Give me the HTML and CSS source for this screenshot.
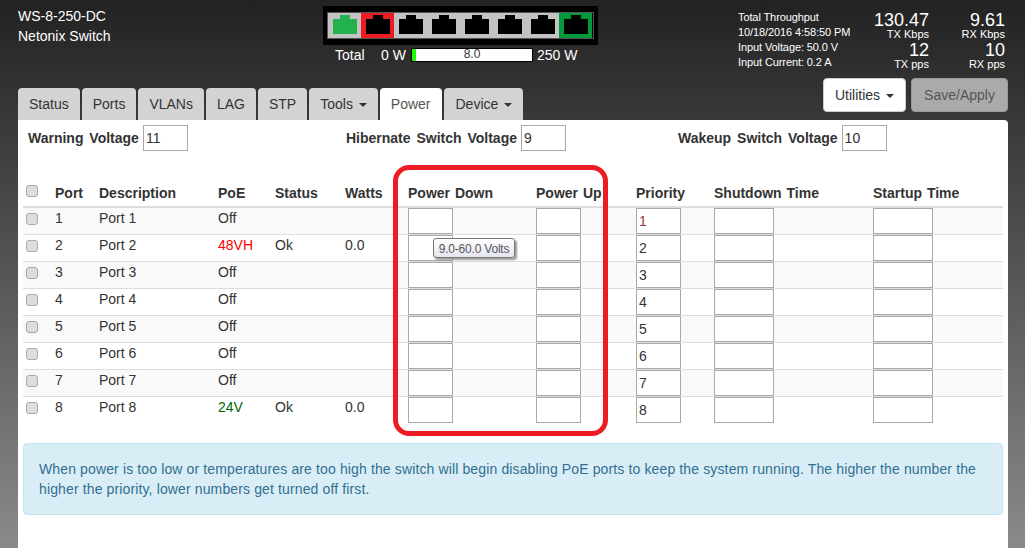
FILE: index.html
```html
<!DOCTYPE html>
<html lang="en">
<head>
<meta charset="utf-8">
<title>Netonix Switch</title>
<link rel="stylesheet" href="styles.css">
</head>
<body>
<header class="top">
  <div class="title"><div>WS-8-250-DC</div><div>Netonix Switch</div></div>
  <div class="device">
    <div class="ports">
      <div class="ports-inner">
        <svg class="port idle" viewBox="0 0 33 25"><rect class="frame" width="33" height="25"/><path class="jack up" d="M5 6h7V2h10v4h7v15H5z"/></svg>
        <svg class="port fault" viewBox="0 0 33 25"><rect class="frame" width="33" height="25"/><path class="jack" d="M5 6h7V2h10v4h7v15H5z"/></svg>
        <svg class="port idle" viewBox="0 0 33 25"><rect class="frame" width="33" height="25"/><path class="jack" d="M5 6h7V2h10v4h7v15H5z"/></svg>
        <svg class="port idle" viewBox="0 0 33 25"><rect class="frame" width="33" height="25"/><path class="jack" d="M5 6h7V2h10v4h7v15H5z"/></svg>
        <svg class="port idle" viewBox="0 0 33 25"><rect class="frame" width="33" height="25"/><path class="jack" d="M5 6h7V2h10v4h7v15H5z"/></svg>
        <svg class="port idle" viewBox="0 0 33 25"><rect class="frame" width="33" height="25"/><path class="jack" d="M5 6h7V2h10v4h7v15H5z"/></svg>
        <svg class="port idle" viewBox="0 0 33 25"><rect class="frame" width="33" height="25"/><path class="jack" d="M5 6h7V2h10v4h7v15H5z"/></svg>
        <svg class="port poe" viewBox="0 0 33 25"><rect class="frame" width="33" height="25"/><path class="jack" d="M5 6h7V2h10v4h7v15H5z"/></svg>
      </div>
    </div>
    <div class="power">
      <span class="power-total">Total</span>
      <span class="power-min">0 W</span>
      <div class="meter"><div class="meter-fill"></div><span class="meter-text">8.0</span></div>
      <span>250 W</span>
    </div>
  </div>
  <div class="stats">
    <div class="stats-info">
      <div>Total Throughput</div>
      <div>10/18/2016 4:58:50 PM</div>
      <div>Input Voltage: 50.0 V</div>
      <div>Input Current: 0.2 A</div>
    </div>
    <div class="stats-grid">
      <div class="stat stat-tx"><b>130.47</b><span>TX Kbps</span></div>
      <div class="stat stat-rx"><b>9.61</b><span>RX Kbps</span></div>
      <div class="stat stat-tx"><b>12</b><span>TX pps</span></div>
      <div class="stat stat-rx"><b>10</b><span>RX pps</span></div>
    </div>
  </div>
</header>

<nav class="navbar">
  <div class="tabs">
    <a class="tab">Status</a>
    <a class="tab">Ports</a>
    <a class="tab">VLANs</a>
    <a class="tab">LAG</a>
    <a class="tab">STP</a>
    <a class="tab">Tools <i class="caret"></i></a>
    <a class="tab active">Power</a>
    <a class="tab">Device <i class="caret"></i></a>
  </div>
  <div class="actions">
    <button class="btn btn-light">Utilities <i class="caret"></i></button>
    <button class="btn btn-muted">Save/Apply</button>
  </div>
</nav>

<main class="panel">
  <div class="voltages">
    <label class="voltage">Warning Voltage <input class="field" value="11"></label>
    <label class="voltage">Hibernate Switch Voltage <input class="field" value="9"></label>
    <label class="voltage">Wakeup Switch Voltage <input class="field" value="10"></label>
  </div>

  <table class="grid">
    <colgroup>
      <col class="c-check"><col class="c-port"><col class="c-desc"><col class="c-poe"><col class="c-status"><col class="c-watts"><col class="c-down"><col class="c-up"><col class="c-prio"><col class="c-shut"><col class="c-start">
    </colgroup>
    <thead>
      <tr><th><input type="checkbox" class="check"></th><th>Port</th><th>Description</th><th>PoE</th><th>Status</th><th>Watts</th><th>Power Down</th><th>Power Up</th><th>Priority</th><th>Shutdown Time</th><th>Startup Time</th></tr>
    </thead>
    <tbody>
      <tr><td><input type="checkbox" class="check"></td><td>1</td><td>Port 1</td><td>Off</td><td></td><td></td><td><input class="field"></td><td><input class="field"></td><td><input class="field prio-first" value="1"></td><td><input class="field wide"></td><td><input class="field wide"></td></tr>
      <tr><td><input type="checkbox" class="check"></td><td>2</td><td>Port 2</td><td class="poe-high">48VH</td><td>Ok</td><td>0.0</td><td><input class="field"></td><td><input class="field"></td><td><input class="field" value="2"></td><td><input class="field wide"></td><td><input class="field wide"></td></tr>
      <tr><td><input type="checkbox" class="check"></td><td>3</td><td>Port 3</td><td>Off</td><td></td><td></td><td><input class="field"></td><td><input class="field"></td><td><input class="field" value="3"></td><td><input class="field wide"></td><td><input class="field wide"></td></tr>
      <tr><td><input type="checkbox" class="check"></td><td>4</td><td>Port 4</td><td>Off</td><td></td><td></td><td><input class="field"></td><td><input class="field"></td><td><input class="field" value="4"></td><td><input class="field wide"></td><td><input class="field wide"></td></tr>
      <tr><td><input type="checkbox" class="check"></td><td>5</td><td>Port 5</td><td>Off</td><td></td><td></td><td><input class="field"></td><td><input class="field"></td><td><input class="field" value="5"></td><td><input class="field wide"></td><td><input class="field wide"></td></tr>
      <tr><td><input type="checkbox" class="check"></td><td>6</td><td>Port 6</td><td>Off</td><td></td><td></td><td><input class="field"></td><td><input class="field"></td><td><input class="field" value="6"></td><td><input class="field wide"></td><td><input class="field wide"></td></tr>
      <tr><td><input type="checkbox" class="check"></td><td>7</td><td>Port 7</td><td>Off</td><td></td><td></td><td><input class="field"></td><td><input class="field"></td><td><input class="field" value="7"></td><td><input class="field wide"></td><td><input class="field wide"></td></tr>
      <tr><td><input type="checkbox" class="check"></td><td>8</td><td>Port 8</td><td class="poe-low">24V</td><td>Ok</td><td>0.0</td><td><input class="field"></td><td><input class="field"></td><td><input class="field" value="8"></td><td><input class="field wide"></td><td><input class="field wide"></td></tr>
    </tbody>
  </table>

  <div class="alert">When power is too low or temperatures are too high the switch will begin disabling PoE ports to keep the system running. The higher the number the higher the priority, lower numbers get turned off first.</div>

  <div class="highlight"></div>
  <div class="tooltip">9.0-60.0 Volts</div>
</main>
</body>
</html>
```
FILE: styles.css
```css
* { box-sizing: border-box; }
html, body { height: 100%; }
body {
  margin: 0;
  padding: 0 17px 0 18px;
  display: flex;
  flex-direction: column;
  font: 14px/20px "Liberation Sans", Arial, sans-serif;
  color: #333;
  background: linear-gradient(#222222, #8a8a8a);
  overflow: hidden;
}
.top { height: 78px; display: flex; color: #fff; flex: none; }
.title { width: 305px; padding-top: 6px; }
.device { width: 275px; padding-top: 6px; }
.ports { height: 39px; background: #000; padding: 6px 4px; }
.ports-inner { height: 27px; border: 1px solid #555; display: flex; }
.port { width: 33px; height: 25px; display: block; }
.frame { fill: #c3c3c3; }
.jack { fill: #000; }
.jack.up { fill: #22b14c; }
.fault .frame { fill: #ed1c24; }
.poe .frame { fill: #009a3d; }
.power { display: flex; align-items: center; height: 20px; }
.power-total { margin-left: 12px; width: 46px; }
.power-min { width: 30px; }
.meter { position: relative; width: 122px; height: 14px; background: #fff; border: 1px solid #000; margin-right: 4px; }
.meter-fill { width: 4px; height: 100%; background: #1aff00; }
.meter-text { position: absolute; inset: 0; text-align: center; font-size: 12px; line-height: 10px; color: #333; }
.stats { margin-left: 140px; display: flex; padding-top: 10px; }
.stats-info { width: 127px; font-size: 11px; line-height: 15px; letter-spacing: -.1px; }
.stats-grid { display: grid; grid-template-columns: 64px 76px; align-content: start; margin-top: 1px; }
.stat { display: flex; flex-direction: column; align-items: flex-end; height: 30px; }
.stat b { font-weight: 400; font-size: 18px; line-height: 18px; }
.stat span { font-size: 11px; line-height: 10px; }

.navbar { height: 42px; display: flex; justify-content: space-between; flex: none; }
.tabs { display: flex; gap: 2px; align-self: flex-end; }
.tab { height: 32px; padding: 0 11px; line-height: 32px; background: #d3d3d3; border-radius: 4px 4px 0 0; color: #333; }
.tab.active { background: #fff; color: #555; padding-right: 12px; }
.caret { display: inline-block; width: 0; height: 0; margin-left: 2px; vertical-align: middle; border-top: 4px solid currentColor; border-left: 4px solid transparent; border-right: 4px solid transparent; }
.actions { display: flex; gap: 5px; align-items: flex-start; }
.btn { height: 34px; font: inherit; padding: 0; border-radius: 4px; border: 1px solid #ccc; white-space: nowrap; }
.btn-light { width: 83px; background: #fff; color: #333; }
.btn-muted { width: 97px; background: #aaa; border-color: #999; color: #555; }

.panel { position: relative; flex: 1; background: #fff; border-radius: 0 4px 0 0; padding: 5px; }
.voltages { display: grid; grid-template-columns: 318px 332px auto; padding-left: 5px; height: 27px; }
.voltage { font-weight: 700; display: flex; align-items: center; gap: 4px; height: 26px; line-height: 25px; word-spacing: 2px; white-space: nowrap; }
.field { width: 45px; height: 26px; border: 1px solid #a9a9a9; padding: 0 2px; font: 14px "Liberation Sans", Arial, sans-serif; color: #333; background: #fff; display: block; border-radius: 0; outline: 0; }
.field.wide { width: 60px; }
.prio-first { color: #933; }
.grid { width: 980px; table-layout: fixed; border-collapse: collapse; margin-top: 28px; }
.c-check { width: 32px; } .c-port { width: 44px; } .c-desc { width: 119px; } .c-poe { width: 57px; }
.c-status { width: 70px; } .c-watts { width: 63px; } .c-down { width: 128px; } .c-up { width: 100px; }
.c-prio { width: 78px; } .c-shut { width: 159px; } .c-start { width: 130px; }
.grid th { height: 27px; padding: 0; text-align: left; font-weight: 700; border-bottom: 2px solid #ddd; word-spacing: 1px; white-space: nowrap; }
.grid td { height: 27px; padding: 0; border-top: 1px solid #ddd; vertical-align: top; }
.grid thead + tbody tr:first-child td { border-top: 0; }
.grid tbody tr:nth-child(odd) { background: #f9f9f9; }
.check { margin: 5px 0 0 3px; width: 12px; height: 12px; display: block; appearance: none; background: #ddd; border: 1px solid #aaa; border-radius: 3px; }
.grid th .check { margin-top: 0; margin-bottom: 4px; }
.poe-high { color: #f00; }
.poe-low { color: #060; }
.alert { margin-top: 19px; height: 72px; padding: 15px; background: #d9edf7; border: 1px solid #bce8f1; border-radius: 4px; color: #31708f; width: 980px; letter-spacing: .13px; }
.highlight { position: absolute; left: 375px; top: 45px; width: 215px; height: 271px; border: 5px solid #ed1c24; border-radius: 16px; }
.tooltip { position: absolute; left: 415px; top: 118px; width: 82px; height: 20px; border: 1px solid #767676; border-radius: 3px; background: linear-gradient(#fff, #e4e5f0); box-shadow: 2px 2px 2px #999; color: #575757; font-size: 12px; line-height: 20px; letter-spacing: -.2px; text-align: center; white-space: nowrap; }
```
